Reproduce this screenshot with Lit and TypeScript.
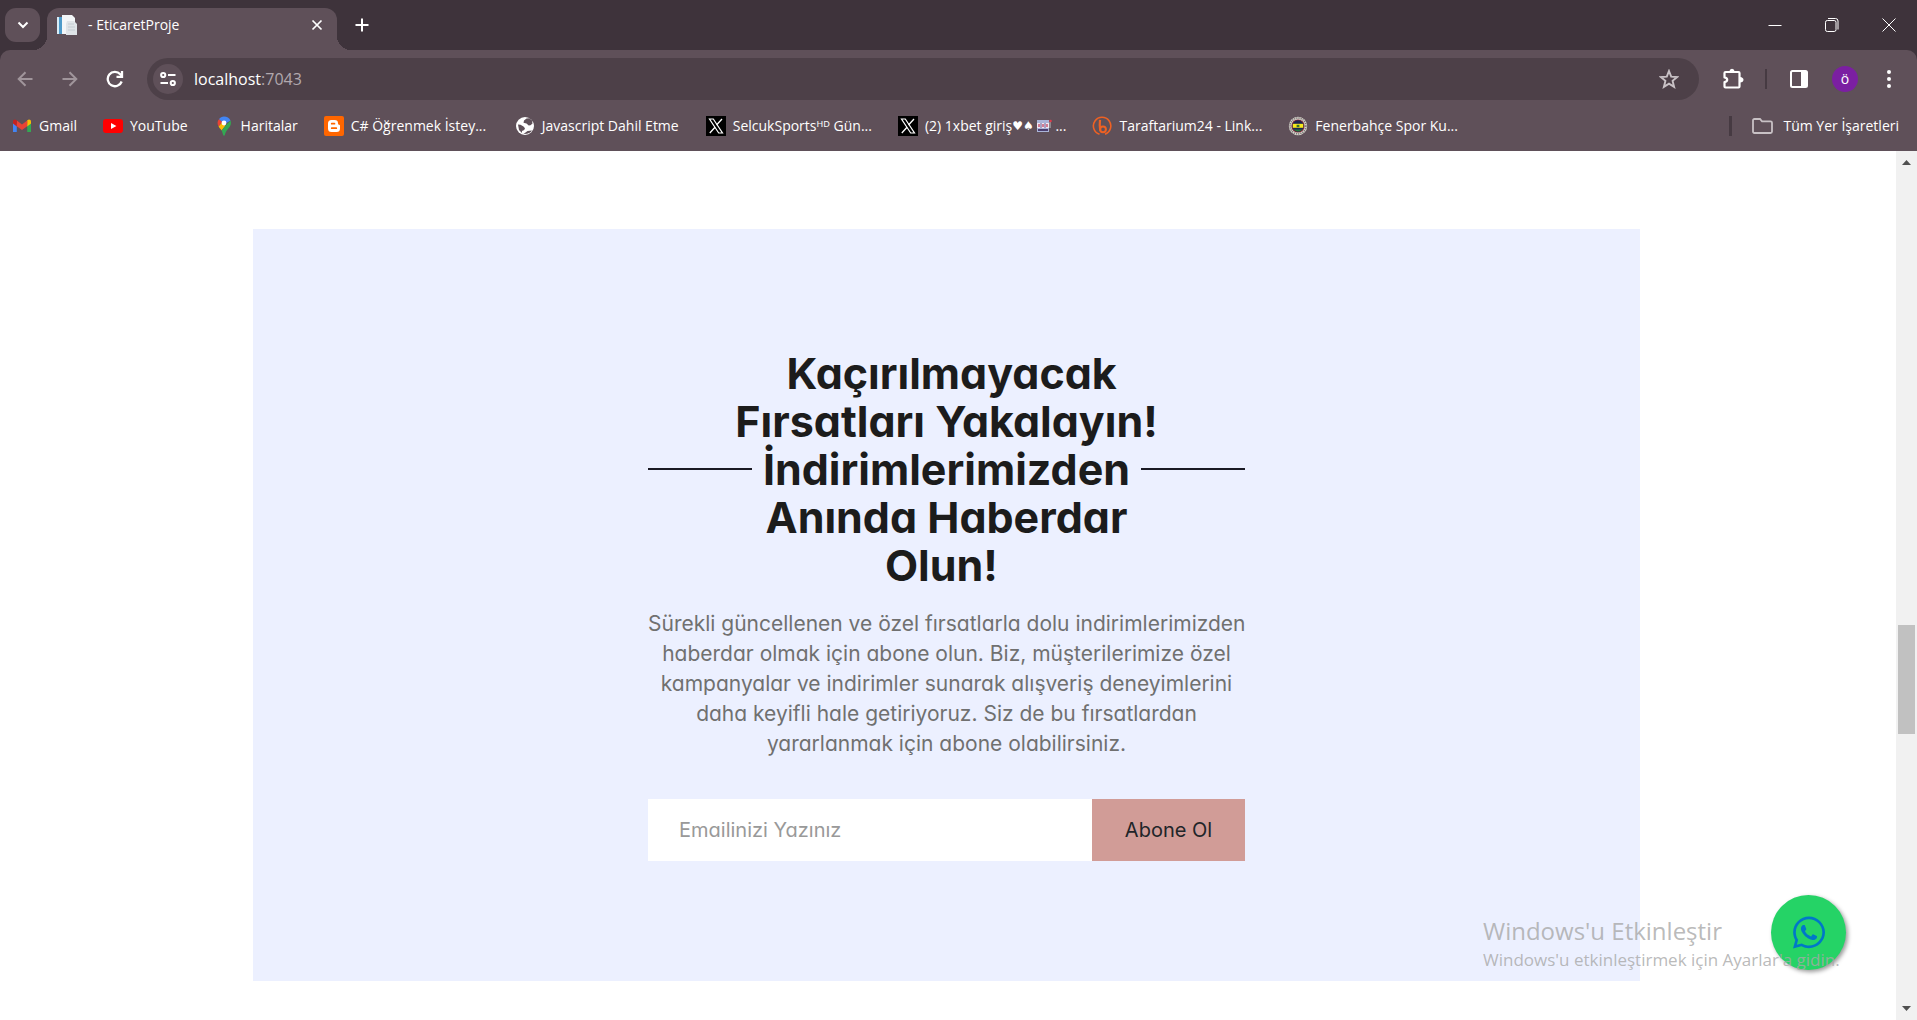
import { LitElement, html, svg, css } from "lit";
import { customElement } from "lit/decorators.js";

const gmail = svg`<svg viewBox="0 0 20 20" width="20" height="20"><path d="M1 5v11h3.8V8z" fill="#4285f4"/><path d="M19 5v11h-3.8V8z" fill="#34a853"/><path d="M15.2 4.2 17 3.4Q19 3.4 19 5.2v2.2l-3.8 3z" fill="#fbbc04"/><path d="M4.8 4.6 10 8.6l5.2-4v5.6L10 14l-5.2-3.8z" fill="#ea4335"/><path d="M4.8 4.2 3 3.4Q1 3.4 1 5.2v2.2l3.8 3z" fill="#c5221f"/></svg>`;
const youtube = svg`<svg viewBox="0 0 20 20" width="20" height="20"><rect y="3" width="20" height="14" rx="3" fill="#f00"/><path d="M8 7v6l5.4-3z" fill="#fff"/></svg>`;
const maps = svg`<svg viewBox="0 0 20 20" width="20" height="20"><path d="M10 .5C13 .5 15.300 2 16.500 4.500L10 8.500 5 3.300C6.200 1.500 8 .5 10 .5z" fill="#4285f4"/><path d="M5 3.300 8.200 6 4.600 10.600C3 7.600 3.300 5 5 3.300z" fill="#ea4335"/><path d="M11.500 9.400 7.600 14.500C6.500 13 5.300 12 4.600 10.600L8.300 6.200z" fill="#fbbc04"/><path d="M16.500 4.500C17.600 8 16.500 10 14.300 12.600 12.300 15 11.400 16.600 10.900 19q-.9 1.400-1.800 0C8.700 17.500 8.300 15.700 7.600 14.500L12 9z" fill="#34a853"/><circle cx="10" cy="7" r="2.400" fill="#fff"/></svg>`;
const blogger = svg`<svg viewBox="0 0 20 20" width="20" height="20"><rect width="20" height="20" rx="2" fill="#f60"/><path d="M4 7.500Q4 4 7.500 4h3Q14 4 14 7.300q0 1.500 1.200 1.500.8 0 .8 1v2.700Q16 16 12.500 16h-5Q4 16 4 12.500z" fill="#fff"/><path d="M7.700 7.700h2.800M7.700 12.200h4.600" stroke="#f60" stroke-width="1.700" stroke-linecap="round"/></svg>`;
const globe = svg`<svg viewBox="0 0 20 20" width="20" height="20"><circle cx="10" cy="10" r="9" fill="#fff"/><path d="M11.500 2.500 9 4.500l-.5 2.200 3 .8 2.200 2 1.800-.3 2-1.700-.6-3.200-2.700-2zM3 8.500l2.500.2 3 1.700 1.500 1.800-.8 1.800-2.200 1v2.300l1.500.7 4-3 4.500-.4-1.700 1.900-3.300 1.300-4 .2L4 14z" fill="#5f5059"/></svg>`;
const xlogo = svg`<svg viewBox="0 0 20 20" width="20" height="20"><rect width="20" height="20" fill="#000"/><path d="M3.500 3h3.800l9.200 14h-3.800z" fill="none" stroke="#fff" stroke-width="1.200"/><path d="M16 3l-5.500 6M9 11.300 3.800 17" stroke="#fff" stroke-width="1.300"/></svg>`;
const bitly = svg`<svg viewBox="0 0 20 20" width="20" height="20" fill="none" stroke="#ee6123"><path d="M7.500 18.300A8.700 8.700 0 1 1 13 18.200" stroke-width="1.600"/><path d="M8 3.800q-.6 5 .2 10.700" stroke-width="2.200"/><circle cx="11" cy="13.300" r="2.900" stroke-width="2"/></svg>`;
const fener = svg`<svg viewBox="0 0 20 20" width="20" height="20"><circle cx="10" cy="10" r="9.200" fill="#d8d5cf"/><circle cx="10" cy="10" r="7.900" fill="none" stroke="#77736f" stroke-width="1.500" stroke-dasharray="1.200 1"/><circle cx="10" cy="10" r="6.600" fill="#7d2a35"/><circle cx="10" cy="10" r="5.700" fill="#1b2452"/><path d="M4.800 7.800h10.400v4H4.800z" fill="#f7e91c"/><path d="M8.600 8.800h2.800v2.400H8.600z" fill="#35702f"/><path d="M5.500 13.500q4.500 4 9 0z" fill="#25783d"/></svg>`;

const bookmarks: [unknown, string][] = [
  [gmail, "Gmail"],
  [youtube, "YouTube"],
  [maps, "Haritalar"],
  [blogger, "C# Öğrenmek İstey..."],
  [globe, "Javascript Dahil Etme"],
  [xlogo, "SelcukSportsᴴᴰ Gün..."],
  [xlogo, "slots"],
  [bitly, "Taraftarium24 - Link..."],
  [fener, "Fenerbahçe Spor Ku..."],
];

@customElement("browser-tabs")
class BrowserTabs extends LitElement {
  static styles = css`
    :host { display: block; background: #3e333b; }
    * { box-sizing: border-box; }
    button { border: 0; padding: 0; background: none; color: #fff; display: grid; place-items: center; }
    svg { display: block; }
    .strip { display: flex; height: 50px; padding-left: 5px; align-items: flex-start; }
    .search { width: 35px; height: 34px; margin-top: 8px; border-radius: 11px; background: #5f5059; }
    .tab { position: relative; display: flex; align-items: center; gap: 11px; width: 290px; height: 42px; margin: 8px 0 0 7px; padding: 0 5px 8px 10px; border-radius: 12px 12px 0 0; background: #5f5059; color: #fff; font: 14px/20px "Open Sans", "Noto Sans", sans-serif; }
    .tab::before, .tab::after { content: ""; position: absolute; bottom: 0; width: 14px; height: 14px; }
    .tab::before { left: -14px; background: radial-gradient(circle at 0 0, transparent 14px, #5f5059 14px); }
    .tab::after { right: -14px; background: radial-gradient(circle at 100% 0, transparent 14px, #5f5059 14px); }
    .title { flex: 1; }
    .close { width: 30px; height: 30px; }
    .new { width: 36px; height: 34px; margin: 8px 0 0 7px; }
    .controls { display: flex; margin-left: auto; }
    .controls button { width: 57px; height: 49px; }
  `;
  render() {
    return html`<div class="strip">
      <button class="search" aria-label="Sekmelerde ara"><svg width="14" height="14" viewBox="0 0 14 14" fill="none" stroke="#fff" stroke-width="2"><path d="M2.500 4.500 7 9l4.500-4.500"/></svg></button>
      <div class="tab">
        <svg width="20" height="20" viewBox="0 0 20 20"><path d="M0 2h6v17H0z" fill="#4d9ac9"/><path d="M0 2h2v17H0z" fill="#d8edf7"/><path d="M5 0h10l3 3v16H5z" fill="#f3f6f8"/><path d="M10 6h7l3 3v11H9V9z" fill="#dfe4e8"/><path d="M11 9h6M11 12h7M11 15h7" stroke="#c3ccd2"/></svg>
        <span class="title">- EticaretProje</span>
        <button class="close" aria-label="Sekmeyi kapat"><svg width="12" height="12" viewBox="0 0 12 12" stroke="#fff" stroke-width="1.700"><path d="m1.500 1.500 9 9M10.500 1.500l-9 9"/></svg></button>
      </div>
      <button class="new" aria-label="Yeni sekme"><svg width="14" height="14" viewBox="0 0 14 14" stroke="#fff" stroke-width="2"><path d="M7 .5v13M.5 7h13"/></svg></button>
      <div class="controls">
        <button aria-label="Küçült"><svg width="14" height="14" viewBox="0 0 14 14" stroke="#fff"><path d="M.5 7.500h13"/></svg></button>
        <button aria-label="Geri yükle"><svg width="14" height="14" viewBox="0 0 14 14" fill="none" stroke="#fff"><rect x=".5" y="2.500" width="10.500" height="11" rx="1.800"/><path d="M3 .5h7.500q2.500 0 2.500 2.500v8.500"/></svg></button>
        <button aria-label="Kapat"><svg width="14" height="14" viewBox="0 0 14 14" stroke="#fff"><path d="m.5.5 13 13M13.500.5l-13 13"/></svg></button>
      </div>
    </div>`;
  }
}

@customElement("browser-toolbar")
class BrowserToolbar extends LitElement {
  static styles = css`
    :host { display: block; background: #3e333b; font-family: "Open Sans", "Noto Sans", sans-serif; color: #fff; }
    * { box-sizing: border-box; }
    button { border: 0; padding: 0; background: none; color: inherit; font: inherit; display: grid; place-items: center; flex: none; }
    svg { display: block; flex: none; }
    .bar { background: #5f5059; border-radius: 10px 10px 0 0; }
    .row { display: flex; align-items: center; padding: 8px 8px 0 2px; }
    .nav { width: 45px; height: 42px; }
    .address { display: flex; align-items: center; flex: 1; height: 42px; margin: 0 14px 0 10px; padding: 0 20px 0 6px; border-radius: 21px; background: #4d4048; }
    .site { width: 30px; height: 30px; border-radius: 15px; background: #5f5059; margin-right: 11px; }
    .url { flex: 1; font-size: 16px; line-height: 22px; color: #b1a8ae; }
    .url b { font-weight: 400; color: #fff; }
    .icon { width: 40px; height: 42px; }
    .side { margin-left: 12px; }
    .avatar { width: 26px; height: 26px; margin: 0 11px 0 13px; border-radius: 13px; background: #7b1fa2; font-size: 14px; line-height: 20px; }
    .rule { width: 2px; height: 20px; background: #463a42; margin-left: 12px; }
    .marks { display: flex; align-items: center; height: 51px; padding: 0 18px 0 12px; font-size: 14px; line-height: 20px; }
    .marks a { display: flex; align-items: center; gap: 7px; color: #fff; text-decoration: none; white-space: nowrap; margin-right: 26px; }
    .marks a.all { gap: 10px; margin: 0 0 0 20px; }
    .long { min-width: 138px; }
    .end { display: flex; align-items: center; margin-left: auto; }
    .end .rule { width: 3px; }
    .slots { display: flex; align-items: center; }
    .suits { font-family: "DejaVu Sans", sans-serif; font-size: 12px; }
  `;
  render() {
    return html`<div class="bar">
      <div class="row">
        <button class="nav" aria-label="Geri"><svg width="16" height="16" viewBox="0 0 16 16" fill="none" stroke="#a0959b" stroke-width="2"><path d="M15.500 8H2M8.500 1.200 1.700 8l6.800 6.800"/></svg></button>
        <button class="nav" aria-label="İleri"><svg width="16" height="16" viewBox="0 0 16 16" fill="none" stroke="#a0959b" stroke-width="2"><path d="M.5 8H14M7.500 1.200 14.300 8l-6.800 6.800"/></svg></button>
        <button class="nav" aria-label="Yenile"><svg width="18" height="18" viewBox="0 0 18 18" fill="none" stroke="#fff" stroke-width="2.300"><path d="M15.700 11.500A7.200 7.200 0 1 1 14.300 4.200L16 6"/><path d="M10.500 6.800H16V1"/></svg></button>
        <div class="address">
          <button class="site" aria-label="Site bilgileri"><svg width="16" height="16" viewBox="0 0 16 16" fill="none" stroke="#fff" stroke-width="2"><circle cx="3.200" cy="4" r="2.100"/><path d="M8 4h7.500M.5 12H8"/><circle cx="12.800" cy="12" r="2.100"/></svg></button>
          <span class="url"><b>localhost</b>:7043</span>
          <button aria-label="Yer işareti ekle"><svg width="20" height="20" viewBox="0 0 20 20" fill="none" stroke="#c8c1c5" stroke-width="1.900"><path d="m10 2 2.200 5.700 6 .3-4.600 3.900 1.500 6L10 14.600l-5.100 3.300 1.500-6L1.800 8l6-.3z"/></svg></button>
        </div>
        <button class="icon" aria-label="Uzantılar"><svg width="22" height="22" viewBox="0 0 22 22"><path d="M3.500 4h13q1 0 1 1v13.500q0 1-1 1h-13q-1 0-1-1v-4.300q2.700-.4 2.700-2.400T2.500 9.400V5q0-1 1-1z" fill="none" stroke="#fff" stroke-width="2.200" stroke-linejoin="round"/><path d="M7.300 3.500Q7.800.8 10 .8t2.700 2.700zM18 9q3.500.4 3.500 2.800T18 14.600z" fill="#fff"/></svg></button>
        <span class="rule"></span>
        <button class="icon side" aria-label="Yan panel"><svg width="18" height="18" viewBox="0 0 18 18"><rect x="1" y="1" width="16" height="16" rx="1.500" fill="none" stroke="#fff" stroke-width="2"/><path d="M11 1h6v16h-6z" fill="#fff"/></svg></button>
        <button class="avatar" aria-label="Profil">ö</button>
        <button class="icon" aria-label="Menü"><svg width="4" height="18" viewBox="0 0 4 18" fill="#fff"><circle cx="2" cy="2" r="2"/><circle cx="2" cy="9" r="2"/><circle cx="2" cy="16" r="2"/></svg></button>
      </div>
      <nav class="marks">
        ${bookmarks.map(([icon, label]) => html`<a href="#">${icon}${label === "slots"
          ? html`<span class="slots long">(2) 1xbet giriş<span class="suits">♥♠</span><svg width="18" height="14" viewBox="-2 0 18 14"><path d="M1 1h12v12H1z" fill="#aab4d8"/><path d="M1 4h12v5H1z" fill="#efe8f2"/><path d="M3 5v3M7 5v3M11 5v3" stroke="#c65875" stroke-width="1.500"/><path d="M5 4v5M9 4v5" stroke="#655a91"/><path d="M2 10h10v2H2z" fill="#4b3f70"/><path d="M14 3v6" stroke="#bbb"/><circle cx="14.500" cy="2" r="1.300" fill="#dd3b4a"/></svg>&nbsp;...</span>`
          : html`<span class=${label.length > 18 ? "long" : ""}>${label}</span>`}</a>`)}
        <div class="end">
          <span class="rule"></span>
          <a class="all" href="#"><svg width="21" height="16" viewBox="0 0 21 16" fill="none" stroke="#c8c1c5" stroke-width="1.800"><path d="M1 2.500Q1 1 2.500 1H8l2 2.300h8.500q1.500 0 1.500 1.500v8.700q0 1.500-1.500 1.500h-16Q1 15 1 13.500z"/></svg>Tüm Yer İşaretleri</a>
        </div>
      </nav>
    </div>`;
  }
}

@customElement("page-scrollbar")
class PageScrollbar extends LitElement {
  static styles = css`
    :host { display: flex; flex-direction: column; align-items: center; width: 21px; background: #f1f1f1; }
    svg { display: block; flex: none; }
    .above { flex: 453; }
    .thumb { flex: 109; width: 17px; background: #c1c1c1; }
    .below { flex: 265; }
  `;
  render() {
    return html`<svg width="21" height="21" viewBox="0 0 21 21"><path d="M6 14h9l-4.500-5z" fill="#505050"/></svg>
      <div class="above"></div><div class="thumb"></div><div class="below"></div>
      <svg width="21" height="21" viewBox="0 0 21 21"><path d="M6 7h9l-4.500 5z" fill="#505050"/></svg>`;
  }
}

@customElement("newsletter-card")
class NewsletterCard extends LitElement {
  static styles = css`
    :host { display: block; background: #ecf0ff; padding: 120px 20px; font-family: Inter, "Open Sans", sans-serif; font-feature-settings: "cv11"; }
    * { box-sizing: border-box; }
    .inner { max-width: 597px; margin: 0 auto; text-align: center; }
    .heading { display: grid; grid-template-columns: 104px 1fr 104px; align-items: center; margin-bottom: 20px; }
    .line { grid-row: 1; height: 2px; background: #1a1a24; }
    .line.start { grid-column: 1; }
    .line.end { grid-column: 3; }
    h3 { grid-area: 1 / 1 / 2 / 4; margin: 0; font-size: 43px; line-height: 48px; font-weight: 700; color: #1c1c1c; white-space: nowrap; }
    p { margin: 0 0 40px; font-size: 21px; line-height: 30px; color: #707070; white-space: nowrap; }
    form { display: flex; height: 62px; }
    input, button { border: 0; border-radius: 0; font: 20px/30px Inter, "Open Sans", sans-serif; font-feature-settings: "cv11"; }
    input { flex: 1; min-width: 0; padding: 0 31px; background: #fff; color: #1c1c1c; outline: 0; }
    input::placeholder { color: #999; opacity: 1; }
    button { width: 153px; padding: 0; background: #d19c97; color: #212529; }
  `;
  render() {
    return html`<div class="inner">
      <div class="heading">
        <span class="line start"></span>
        <h3>&nbsp;Kaçırılmayacak<br>Fırsatları Yakalayın!<br>İndirimlerimizden<br>Anında Haberdar<br>Olun!&nbsp;</h3>
        <span class="line end"></span>
      </div>
      <p>Sürekli güncellenen ve özel fırsatlarla dolu indirimlerimizden<br>haberdar olmak için abone olun. Biz, müşterilerimize özel<br>kampanyalar ve indirimler sunarak alışveriş deneyimlerini<br>daha keyifli hale getiriyoruz. Siz de bu fırsatlardan<br>yararlanmak için abone olabilirsiniz.</p>
      <form @submit=${(e: Event) => e.preventDefault()}>
        <input type="email" aria-label="Emailinizi Yazınız" placeholder="Emailinizi Yazınız">
        <button type="submit">Abone Ol</button>
      </form>
    </div>`;
  }
}

@customElement("app-root")
class AppRoot extends LitElement {
  static styles = css`
    :host { display: flex; flex-direction: column; min-height: 100vh; background: #fff; }
    .page { position: relative; display: flex; flex: 1; }
    main { flex: 1; padding: 78px 256px 39px 253px; }
    .chat { position: absolute; right: 71px; bottom: 50px; width: 75px; height: 75px; display: grid; place-items: center; border-radius: 50%; background: #25d366; box-shadow: 2px 2px 4px #999; }
    .notice { position: absolute; right: 79px; bottom: 47px; width: 355px; color: rgba(168, 168, 168, 0.8); font-family: "Open Sans", "Noto Sans", sans-serif; white-space: nowrap; pointer-events: none; }
    .big { font-size: 24px; line-height: 32px; }
    .small { font-size: 17px; line-height: 26px; }
  `;
  render() {
    return html`<browser-tabs></browser-tabs>
      <browser-toolbar></browser-toolbar>
      <div class="page">
        <main><newsletter-card></newsletter-card></main>
        <page-scrollbar aria-hidden="true"></page-scrollbar>
        <a class="chat" href="#" aria-label="WhatsApp"><svg width="32" height="37" viewBox="0 0 448 512" fill="#0078c8"><path fill-rule="evenodd" d="M380.900 97.100C339 55.100 283.200 32 223.900 32c-122.400 0-222 99.600-222 222 0 39.100 10.200 77.300 29.600 111L0 480l117.700-30.900c32.400 17.700 68.900 27 106.100 27h.1c122.300 0 224.100-99.600 224.100-222 0-59.300-25.200-115-67.100-157zM223.900 438.700c-33.200 0-65.700-8.900-94-25.700l-6.700-4-69.800 18.300L72 359.200l-4.400-7c-18.500-29.400-28.200-63.300-28.200-98.200 0-101.700 82.800-184.500 184.600-184.500 49.300 0 95.600 19.200 130.400 54.100 34.800 34.900 56.200 81.200 56.100 130.500 0 101.800-84.900 184.600-186.600 184.600z"/><path d="M325.100 300.500c-5.500-2.800-32.800-16.200-37.900-18-5.100-1.900-8.800-2.800-12.500 2.800-3.700 5.600-14.300 18-17.600 21.800-3.200 3.700-6.500 4.200-12 1.400-32.600-16.300-54-29.100-75.500-66-5.700-9.800 5.700-9.100 16.300-30.300 1.800-3.700.9-6.900-.5-9.700-1.400-2.800-12.500-30.100-17.100-41.200-4.500-10.800-9.100-9.300-12.500-9.500-3.200-.2-6.900-.2-10.600-.2-3.700 0-9.700 1.400-14.800 6.900-5.100 5.600-19.400 19-19.400 46.300 0 27.300 19.900 53.700 22.600 57.400 2.800 3.700 39.100 59.700 94.800 83.800 35.200 15.200 49 16.500 66.600 13.900 10.700-1.600 32.800-13.400 37.400-26.400 4.600-13 4.600-24.100 3.200-26.400-1.300-2.500-5-3.900-10.500-6.600z"/></svg></a>
        <div class="notice"><div class="big">Windows'u Etkinleştir</div><div class="small">Windows'u etkinleştirmek için Ayarlar'a gidin.</div></div>
      </div>`;
  }
}
